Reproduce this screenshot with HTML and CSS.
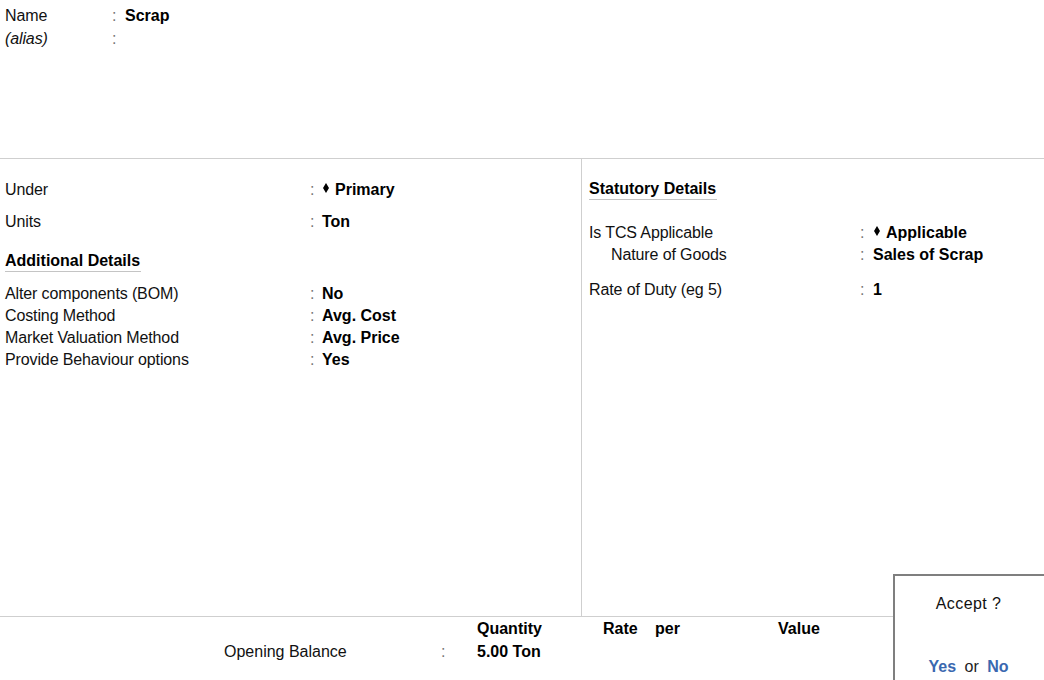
FILE: index.html
```html
<!DOCTYPE html>
<html>
<head>
<meta charset="utf-8">
<link rel="stylesheet" href="styles.css">
</head>
<body>
<div class="screen">
  <section class="top">
    <div class="name-row"><span class="lbl">Name</span><span class="colon">:</span><span class="val">Scrap</span></div>
    <div class="name-row"><span class="lbl alias">(alias)</span><span class="colon">:</span><span class="val"></span></div>
  </section>

  <section class="middle">
    <div class="left">
      <div class="row first"><span class="lbl">Under</span><span class="colon">:</span><span class="val"><svg class="dia" width="6" height="10" viewBox="0 0 6 10"><path d="M3 0 L6 5 L3 10 L0 5 Z"/></svg>Primary</span></div>
      <div class="row gap"><span class="lbl">Units</span><span class="colon">:</span><span class="val">Ton</span></div>
      <div class="heading-wrap"><h2 class="heading">Additional Details</h2></div>
      <div class="row"><span class="lbl">Alter components (BOM)</span><span class="colon">:</span><span class="val">No</span></div>
      <div class="row"><span class="lbl">Costing Method</span><span class="colon">:</span><span class="val">Avg. Cost</span></div>
      <div class="row"><span class="lbl">Market Valuation Method</span><span class="colon">:</span><span class="val">Avg. Price</span></div>
      <div class="row"><span class="lbl">Provide Behaviour options</span><span class="colon">:</span><span class="val">Yes</span></div>
    </div>
    <div class="right">
      <div class="heading-wrap stat"><h2 class="heading">Statutory Details</h2></div>
      <div class="rrow"><span class="lbl">Is TCS Applicable</span><span class="colon">:</span><span class="val"><svg class="dia" width="6" height="10" viewBox="0 0 6 10"><path d="M3 0 L6 5 L3 10 L0 5 Z"/></svg>Applicable</span></div>
      <div class="rrow"><span class="lbl sub">Nature of Goods</span><span class="colon">:</span><span class="val">Sales of Scrap</span></div>
      <div class="rrow gap"><span class="lbl">Rate of Duty (eg 5)</span><span class="colon">:</span><span class="val">1</span></div>
    </div>
  </section>

  <section class="bottom">
    <div class="brow head"><span class="q">Quantity</span><span class="r">Rate</span><span class="p">per</span><span class="v">Value</span></div>
    <div class="brow"><span class="ob">Opening Balance</span><span class="colon">:</span><span class="q">5.00 Ton</span></div>
  </section>

  <div class="popup">
    <div class="ask">Accept ?</div>
    <div class="choice"><span class="opt">Yes</span> or <span class="opt">No</span></div>
  </div>
</div>
</body>
</html>
```

FILE: styles.css
```css
html, body {
  margin: 0;
  padding: 0;
  background: #fff;
}
body {
  font-family: "Liberation Sans", Arial, sans-serif;
  font-size: 16px;
  color: #111;
}
.screen {
  position: relative;
  width: 1044px;
  height: 680px;
  overflow: hidden;
  display: flex;
  flex-direction: column;
}
.lbl {
  letter-spacing: -0.12px;
}
.colon {
  color: #777;
}
.val {
  font-weight: bold;
  color: #000;
  display: flex;
  align-items: center;
}
.dia {
  fill: #000;
  margin-right: 6px;
  margin-left: 1px;
  position: relative;
  top: -2px;
}

/* top */
.top {
  height: 154px;
  padding-top: 4px;
  border-bottom: 1px solid #cfcfcf;
  flex: none;
}
.name-row {
  display: grid;
  grid-template-columns: 105px 15px 1fr;
  padding-left: 5px;
  line-height: 23px;
  height: 23px;
}
.name-row .colon { padding-left: 2px; }
.alias { font-style: italic; }

/* middle */
.middle {
  height: 457px;
  display: flex;
  flex: none;
}
.left {
  width: 582px;
  border-right: 1px solid #cfcfcf;
  padding-top: 20px;
  box-sizing: border-box;
}
.row {
  display: grid;
  grid-template-columns: 305px 12px 1fr;
  padding-left: 5px;
  height: 22px;
  line-height: 22px;
}
.row.gap { margin-top: 10px; }
.heading-wrap {
  padding-left: 5px;
  margin-top: 17px;
  margin-bottom: 11px;
}
.heading {
  display: inline-block;
  margin: 0;
  font-size: 16px;
  font-weight: bold;
  line-height: 21px;
  color: #000;
  border-bottom: 1px solid #c4c4c4;
  padding-right: 1px;
}
.right {
  flex: 1;
  padding-top: 19px;
}
.heading-wrap.stat {
  padding-left: 7px;
  margin-top: 0;
  margin-bottom: 22px;
}
.rrow {
  display: grid;
  grid-template-columns: 271px 13px 1fr;
  padding-left: 7px;
  height: 22px;
  line-height: 22px;
}
.rrow.gap { margin-top: 13px; }
.sub { padding-left: 22px; }

/* bottom */
.bottom {
  flex: 1;
  border-top: 1px solid #cfcfcf;
}
.brow {
  display: grid;
  grid-template-columns: 224px 217px 36px 126px 52px 123px 1fr;
  height: 23px;
  line-height: 23px;
}
.brow .q, .brow .r, .brow .p, .brow .v {
  font-weight: bold;
  color: #000;
}
.brow .ob { grid-column: 2; }
.brow .colon { grid-column: 3; }
.brow .q { grid-column: 4; }
.brow .r { grid-column: 5; }
.brow .p { grid-column: 6; }
.brow .v { grid-column: 7; }

/* popup */
.popup {
  position: absolute;
  left: 893px;
  top: 574px;
  width: 151px;
  height: 110px;
  border: 2px solid #7f7f7f;
  border-right: none;
  background: #fff;
  box-sizing: border-box;
  text-align: center;
}
.ask {
  margin-top: 17px;
  line-height: 22px;
  color: #111;
  letter-spacing: 0.4px;
  padding-right: 2px;
}
.choice {
  margin-top: 41px;
  line-height: 22px;
  color: #222;
  padding-right: 2px;
}
.opt {
  font-weight: bold;
  color: #3a68b0;
  margin: 0 4px;
}
```
